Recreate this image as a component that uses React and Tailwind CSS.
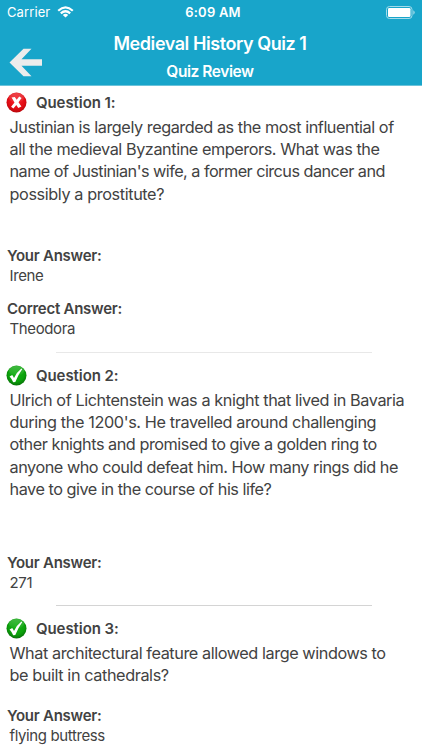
const questions = [
  {
    title: "Question 1:",
    correct: false,
    lines: [
      ["Justinian is largely regarded as the most influential of", "tracking-[-0.45px]"],
      ["all the medieval Byzantine emperors. What was the", "tracking-[-0.44px]"],
      ["name of Justinian's wife, a former circus dancer and", "tracking-[-0.54px]"],
      ["possibly a prostitute?", "tracking-[-0.4px]"],
    ],
    answer: "Irene",
    correctAnswer: "Theodora",
    height: "h-[273px]",
    gap: "mt-[41.5px]",
    rule: "bg-[#e8e8e8]",
  },
  {
    title: "Question 2:",
    correct: true,
    lines: [
      ["Ulrich of Lichtenstein was a knight that lived in Bavaria", "tracking-[-0.42px]"],
      ["during the 1200's. He travelled around challenging", "tracking-[-0.39px]"],
      ["other knights and promised to give a golden ring to", "tracking-[-0.47px]"],
      ["anyone who could defeat him. How many rings did he", "tracking-[-0.47px]"],
      ["have to give in the course of his life?", "tracking-[-0.47px]"],
    ],
    answer: "271",
    height: "h-[253px]",
    gap: "mt-[52.5px]",
    rule: "bg-[#d4d4d4]",
  },
  {
    title: "Question 3:",
    correct: true,
    lines: [
      ["What architectural feature allowed large windows to", "tracking-[-0.43px]"],
      ["be built in cathedrals?", "tracking-[-0.41px]"],
    ],
    answer: "flying buttress",
    height: "h-[150px]",
    gap: "mt-[19.5px]",
  },
];

function StatusIcon({ correct }) {
  const id = correct ? "ball-green" : "ball-red";
  return (
    <svg className="h-[21px] w-[21px] shrink-0" viewBox="0 0 21 21">
      <defs>
        <radialGradient id={id} cx="0.5" cy="0.4" r="0.6">
          <stop offset="0" stopColor={correct ? "#14b014" : "#f5222a"} />
          <stop offset="0.65" stopColor={correct ? "#0ca30c" : "#e50d15"} />
          <stop offset="1" stopColor={correct ? "#087008" : "#b8060c"} />
        </radialGradient>
        <linearGradient id={id + "-shine"} x1="0" y1="0" x2="0" y2="1">
          <stop offset="0" stopColor="#fff" stopOpacity="0.22" />
          <stop offset="1" stopColor="#fff" stopOpacity="0.03" />
        </linearGradient>
      </defs>
      <circle cx="10.5" cy="10.5" r="10" fill={`url(#${id})`} />
      <ellipse cx="10.5" cy="5.8" rx="7.6" ry="4.8" fill={`url(#${id}-shine)`} />
      {correct ? (
        <path d="M3.6 11.6 L6.2 9.9 Q7.4 11.2 8 13 Q10.8 7.2 15.4 3.6 L16.2 4.2 Q12.2 9.6 9.3 17 L7.2 17.2 Q5.8 14 3.6 11.6 Z" fill="#fff" />
      ) : (
        <path d="M5.6 5.6 L8.8 4.9 L10.7 7.7 L13.2 4.5 L15.6 5.9 L12.5 10.2 L15.4 14.6 L12.3 16 L10.3 13 L7.4 16.4 L5.1 14.8 L8.5 10.5 Z" fill="#fff" />
      )}
    </svg>
  );
}

function Answer({ label, value }) {
  return (
    <div>
      <div className="pl-[7px] text-[15px] leading-[20px] font-semibold tracking-[-0.26px]">{label}</div>
      <div className="pl-[9.5px] text-[15px] leading-[19.5px] tracking-[-0.38px]">{value}</div>
    </div>
  );
}

function Question({ q }) {
  return (
    <section className={`flex flex-col ${q.height}`}>
      <div className="flex h-[21px] items-center gap-[9px] pl-[6px]">
        <StatusIcon correct={q.correct} />
        <h2 className="text-[15px] leading-[21px] font-semibold tracking-[-0.08px]">{q.title}</h2>
      </div>
      <div className="mt-[3px] pl-[9.5px] text-[16.25px] leading-[22.2px]">
        {q.lines.map(([text, tracking]) => (
          <div key={text} className={`whitespace-nowrap ${tracking}`}>{text}</div>
        ))}
      </div>
      <div className={`flex flex-col gap-[13.5px] ${q.gap}`}>
        <Answer label="Your Answer:" value={q.answer} />
        {q.correctAnswer && <Answer label="Correct Answer:" value={q.correctAnswer} />}
      </div>
      {q.rule && <div className={`mt-auto mb-[12px] ml-[56px] h-px w-[316px] ${q.rule}`} />}
    </section>
  );
}

export default function App() {
  return (
    <div className="h-[750px] w-[422px] overflow-hidden bg-white font-['Inter',sans-serif] text-[#424242]">
      <header className="flex h-[86px] flex-col border-b border-[#6cc3da] bg-[#18a5ca] text-white">
        <div className="grid h-[24px] grid-cols-3 items-center pr-[7px] pl-[7px] text-[13px]">
          <div className="flex items-center gap-[7px]">
            <span className="pt-px tracking-[0.1px]">Carrier</span>
            <svg className="h-[12px] w-[17px]" viewBox="0 0 17 12" fill="none" stroke="#fff" strokeWidth="2.2">
              <path d="M1.2 4.7 Q8.5 -2 15.8 4.7" />
              <path d="M3.8 7.4 Q8.5 3.1 13.2 7.4" />
              <path d="M8.5 11.6 L5.8 8.9 Q8.5 6.6 11.2 8.9 Z" fill="#fff" stroke="none" />
            </svg>
          </div>
          <div className="pt-px pl-[4px] text-center font-semibold tracking-[0.2px]">6:09 AM</div>
          <svg className="h-[13px] w-[29px] justify-self-end" viewBox="0 0 29 13">
            <rect x="0.5" y="0.5" width="25.5" height="12" rx="3" fill="none" stroke="#a3dbea" />
            <rect x="2" y="2" width="22.5" height="9" rx="1.3" fill="#fff" />
            <path d="M27.3 4.3 Q28.7 5 28.7 6.5 Q28.7 8 27.3 8.7 Z" fill="#a3dbea" />
          </svg>
        </div>
        <div className="grid flex-1 grid-cols-[60px_1fr_62px]">
          <svg className="mt-[24px] ml-[9px] h-[29px] w-[34px]" viewBox="0 0 34 29">
            <path d="M0.5 14.5 L14.5 0.8 H22.5 L12.5 11.2 H33 V17.8 H12.5 L22.5 28.2 H14.5 Z" fill="#ececec" />
          </svg>
          <div className="text-center font-semibold">
            <h1 className="mt-[8px] text-[18px] leading-[24px] tracking-[-0.44px]">Medieval History Quiz 1</h1>
            <p className="mt-[5px] text-[15.5px] leading-[21px] tracking-[-0.44px]">Quiz Review</p>
          </div>
        </div>
      </header>
      <main className="pt-[6px]">
        {questions.map((q) => (
          <Question key={q.title} q={q} />
        ))}
      </main>
    </div>
  );
}
